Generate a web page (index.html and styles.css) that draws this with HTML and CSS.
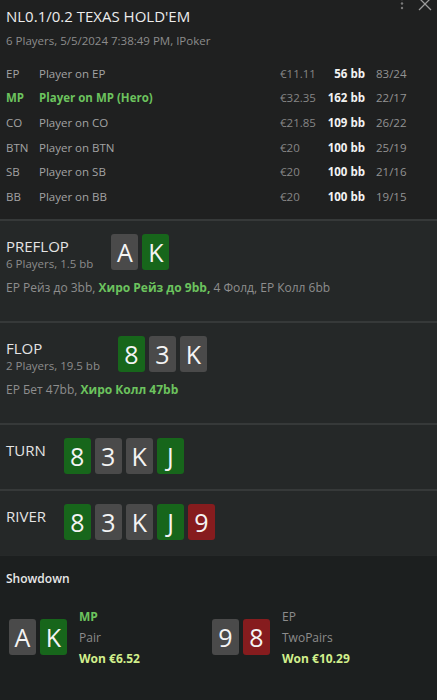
FILE: index.html
```html
<!DOCTYPE html>
<html>
<head>
    <title>Hand History</title>
    <link rel="stylesheet" href="styles.css">
</head>
<body>
    <div class="hand">
        <div class="header">
            <div class="tools">
                <svg class="dots" width="4" height="12" viewBox="0 0 4 12"><circle cx="2" cy="1" r="1.2"/><circle cx="2" cy="5.5" r="1.2"/><circle cx="2" cy="10" r="1.2"/></svg>
                <svg class="close" width="14" height="14" viewBox="0 0 14 14"><path d="M1 1 L13 13 M13 1 L1 13"/></svg>
            </div>
            <div class="title">NL0.1/0.2 TEXAS HOLD'EM</div>
            <div class="subtitle">6 Players, 5/5/2024 7:38:49 PM, IPoker</div>

            <table class="players">
                <tr>
                    <td class="pos">EP</td>
                    <td class="name">Player on EP</td>
                    <td class="stack">€11.11</td>
                    <td class="bb">56 bb</td>
                    <td class="ratio">83/24</td>
                </tr>
                <tr class="hero">
                    <td class="pos">MP</td>
                    <td class="name">Player on MP (Hero)</td>
                    <td class="stack">€32.35</td>
                    <td class="bb">162 bb</td>
                    <td class="ratio">22/17</td>
                </tr>
                <tr>
                    <td class="pos">CO</td>
                    <td class="name">Player on CO</td>
                    <td class="stack">€21.85</td>
                    <td class="bb">109 bb</td>
                    <td class="ratio">26/22</td>
                </tr>
                <tr>
                    <td class="pos">BTN</td>
                    <td class="name">Player on BTN</td>
                    <td class="stack">€20</td>
                    <td class="bb">100 bb</td>
                    <td class="ratio">25/19</td>
                </tr>
                <tr>
                    <td class="pos">SB</td>
                    <td class="name">Player on SB</td>
                    <td class="stack">€20</td>
                    <td class="bb">100 bb</td>
                    <td class="ratio">21/16</td>
                </tr>
                <tr>
                    <td class="pos">BB</td>
                    <td class="name">Player on BB</td>
                    <td class="stack">€20</td>
                    <td class="bb">100 bb</td>
                    <td class="ratio">19/15</td>
                </tr>
            </table>
        </div>

        <div class="street">
            <div class="street-row">
                <div class="street-label">
                    <div class="street-name">PREFLOP</div>
                    <div class="street-info">6 Players, 1.5 bb</div>
                </div>
                <div class="cards">
                    <span class="card gray">A</span>
                    <span class="card green">K</span>
                </div>
            </div>
            <div class="actions">EP Рейз до 3bb, <span class="hero-act">Хиро Рейз до 9bb,</span> 4 Фолд, EP Колл 6bb</div>
        </div>

        <div class="street">
            <div class="street-row">
                <div class="street-label">
                    <div class="street-name">FLOP</div>
                    <div class="street-info">2 Players, 19.5 bb</div>
                </div>
                <div class="cards">
                    <span class="card green">8</span>
                    <span class="card gray">3</span>
                    <span class="card gray">K</span>
                </div>
            </div>
            <div class="actions">EP Бет 47bb, <span class="hero-act">Хиро Колл 47bb</span></div>
        </div>

        <div class="street">
            <div class="street-row">
                <div class="street-label">
                    <div class="street-name">TURN</div>
                </div>
                <div class="cards">
                    <span class="card green">8</span>
                    <span class="card gray">3</span>
                    <span class="card gray">K</span>
                    <span class="card green">J</span>
                </div>
            </div>
        </div>

        <div class="street">
            <div class="street-row">
                <div class="street-label">
                    <div class="street-name">RIVER</div>
                </div>
                <div class="cards">
                    <span class="card green">8</span>
                    <span class="card gray">3</span>
                    <span class="card gray">K</span>
                    <span class="card green">J</span>
                    <span class="card red">9</span>
                </div>
            </div>
        </div>

        <div class="showdown">
            <div class="showdown-title">Showdown</div>
            <div class="results">
                <div class="result">
                    <div class="cards">
                        <span class="card gray">A</span>
                        <span class="card green">K</span>
                    </div>
                    <div class="result-text">
                        <div class="result-pos hero-pos">MP</div>
                        <div class="result-hand">Pair</div>
                        <div class="result-won">Won €6.52</div>
                    </div>
                </div>
                <div class="result">
                    <div class="cards">
                        <span class="card gray">9</span>
                        <span class="card red">8</span>
                    </div>
                    <div class="result-text">
                        <div class="result-pos">EP</div>
                        <div class="result-hand">TwoPairs</div>
                        <div class="result-won">Won €10.29</div>
                    </div>
                </div>
            </div>
        </div>
    </div>
</body>
</html>
```

FILE: styles.css
```css
body {
    margin: 0;
    background-color: #1c1f1f;
    font-family: "Open Sans", "Noto Sans", sans-serif;
    color: #a3a3a3;
}

.hand {
    width: 437px;
    height: 700px;
    overflow: hidden;
}

/* Header with title and player list */
.header {
    position: relative;
    background-color: #1f2020;
    padding: 6px 6px 10px 6px;
}

.tools {
    position: absolute;
    top: -3px;
    right: 5px;
    display: flex;
    align-items: center;
    gap: 14px;
}

.dots {
    fill: #7a7a7a;
}

.close {
    stroke: #9a9a9a;
    stroke-width: 1.3;
}

.title {
    font-size: 15px;
    line-height: 20px;
    color: #ececec;
}

.subtitle {
    font-size: 11.5px;
    line-height: 16px;
    margin-top: 7px;
    color: #8c8c8c;
}

.players {
    border-collapse: collapse;
    margin-top: 12px;
    font-size: 11.5px;
}

.players td {
    padding: 0;
    height: 24.6px;
    white-space: nowrap;
}

.pos {
    width: 33px;
}

.name {
    width: 241px;
}

.stack {
    width: 42px;
    color: #868686;
}

.bb {
    width: 43px;
    text-align: right;
    font-weight: bold;
    color: #f2f2f2;
}

.ratio {
    padding-left: 11px !important;
    color: #939393;
}

.hero .pos,
.hero .name {
    color: #6cc35e;
    font-weight: bold;
}

/* Streets */
.street {
    background-color: #252828;
    border-top: 2px solid #363939;
    padding: 13px 6px 15px 6px;
}

.street-row {
    display: flex;
    align-items: flex-start;
    gap: 18px;
}

.street-label {
    padding-top: 2px;
}

.street-name {
    font-size: 15px;
    line-height: 20px;
    color: #e4e4e4;
}

.street-info {
    font-size: 11.5px;
    line-height: 16px;
    color: #8c8c8c;
}

.actions {
    font-size: 12px;
    line-height: 16px;
    margin: 8px 0 10px 0;
    color: #8e8e8e;
}

.hero-act {
    color: #6cc35e;
    font-weight: bold;
}

/* Cards */
.cards {
    display: flex;
    gap: 4px;
}

.card {
    width: 27px;
    height: 36px;
    border-radius: 3px;
    display: flex;
    align-items: center;
    justify-content: center;
    font-size: 25px;
    color: #f4f4f4;
}

.card.gray {
    background-color: #4a4a4a;
}

.card.green {
    background-color: #17661b;
}

.card.red {
    background-color: #861c1e;
}

/* Showdown */
.showdown {
    background-color: #1c1f1f;
    border-top: 1px solid #262929;
    padding: 15px 6px 0 6px;
}

.showdown-title {
    font-size: 12px;
    line-height: 16px;
    font-weight: 600;
    color: #e8e8e8;
}

.results {
    display: grid;
    grid-template-columns: 203px 1fr;
    margin-top: 19px;
    padding-left: 3px;
}

.result {
    display: flex;
    align-items: center;
    gap: 12px;
}

.result-text {
    font-size: 12px;
    line-height: 21px;
}

.result-pos {
    color: #8c8c8c;
}

.result-pos.hero-pos {
    color: #6cc35e;
    font-weight: bold;
}

.result-hand {
    color: #8c8c8c;
}

.result-won {
    color: #d2ef8c;
    font-weight: bold;
}
```
